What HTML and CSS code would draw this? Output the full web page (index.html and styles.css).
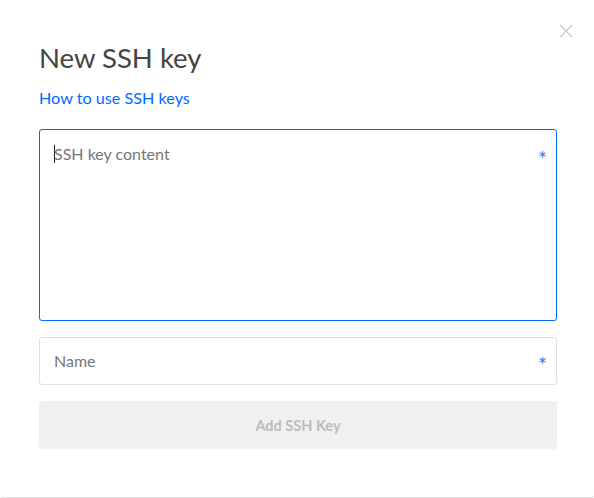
FILE: index.html
```html
<!DOCTYPE html>
<html>
<head>
<meta charset="utf-8">
<link rel="stylesheet" href="styles.css">
</head>
<body>
<div class="modal">
  <button class="close" aria-label="Close">
    <svg width="14" height="14" viewBox="0 0 14 14"><path d="M1 1 L13 13 M13 1 L1 13" stroke="#c8c8c8" stroke-width="1.3" fill="none"/></svg>
  </button>
  <h1 class="title">New SSH key</h1>
  <a class="help" href="#">How to use SSH keys</a>
  <form class="form">
    <div class="field field-area focused">
      <span class="placeholder"><span class="caret"></span>SSH key content</span>
      <span class="req">*</span>
    </div>
    <div class="field field-input">
      <span class="placeholder">Name</span>
      <span class="req">*</span>
    </div>
    <button type="button" class="submit" disabled>Add SSH Key</button>
  </form>
</div>
</body>
</html>
```
FILE: styles.css
```css
* { box-sizing: border-box; }
html, body { margin: 0; padding: 0; background: #fff; }
body { font-family: Lato, "Open Sans", "Liberation Sans", sans-serif; }
.modal {
  position: relative;
  width: 594px;
  height: 498px;
  padding: 40px 37px 0 39px;
  border-bottom: 1px solid #dcdcdc;
  border-radius: 0 0 3px 3px;
}
.close {
  position: absolute;
  top: 24px;
  right: 21px;
  border: 0;
  background: none;
  padding: 0;
  width: 14px;
  height: 14px;
  display: block;
}
.close svg { display: block; }
.title {
  margin: 0;
  font-size: 27.5px;
  font-weight: 400;
  color: #444;
  line-height: 36px;
}
.help {
  display: block;
  margin-top: 12px;
  font-size: 16.2px;
  color: #0069ff;
  text-decoration: none;
  line-height: 20px;
}
.form {
  margin-top: 21px;
  display: flex;
  flex-direction: column;
  gap: 16px;
}
.field {
  position: relative;
  display: flex;
  justify-content: space-between;
  border: 1px solid #dfdfdf;
  border-radius: 3px;
  padding: 0 9px 0 14px;
  font-size: 16px;
  color: #777;
}
.field.focused { border-color: #0069ff; }
.field-area { height: 192px; padding-top: 14px; align-items: flex-start; }
.field-input { height: 48px; align-items: center; }
.placeholder { position: relative; line-height: 20px; }
.caret {
  position: absolute;
  left: 0;
  top: 1px;
  width: 1px;
  height: 18px;
  background: #222;
}
.req {
  color: #2d7bff;
  font-size: 21px;
  line-height: 20px;
  padding-top: 5px;
}
.field-input .req { padding-top: 8px; }
.submit {
  height: 48px;
  border: 0;
  border-radius: 3px;
  background: #f0f0f0;
  color: #bcbcbc;
  font-family: inherit;
  font-weight: 700;
  font-size: 14.5px;
}
```
